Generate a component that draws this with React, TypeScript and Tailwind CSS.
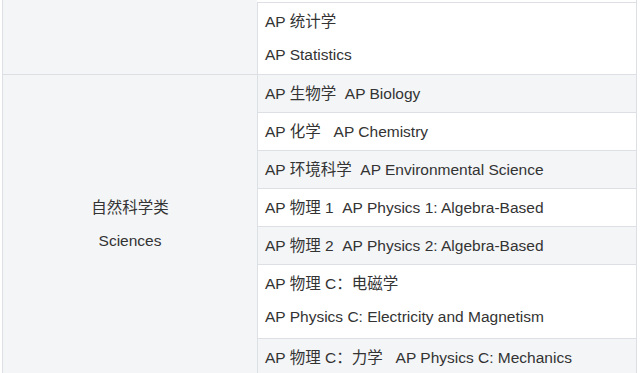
const FONT = "font-['Liberation_Sans','Noto_Sans_CJK_SC',sans-serif]";

type Course = { lines: string[] };

const SCIENCES: Course[] = [
  { lines: ["AP 生物学\u00a0 AP Biology"] },
  { lines: ["AP 化学\u00a0\u00a0 AP Chemistry"] },
  { lines: ["AP 环境科学\u00a0 AP Environmental Science"] },
  { lines: ["AP 物理 1\u00a0 AP Physics 1: Algebra-Based"] },
  { lines: ["AP 物理 2\u00a0 AP Physics 2: Algebra-Based"] },
  { lines: ["AP 物理 C：电磁学", "AP Physics C: Electricity and Magnetism"] },
  { lines: ["AP 物理 C：力学\u00a0\u00a0 AP Physics C: Mechanics"] },
];

function Cell({ lines, shaded, first }: { lines: string[]; shaded: boolean; first?: boolean }) {
  return (
    <div
      className={`flex flex-col gap-[9px] px-[7px] pt-[7px] ${lines.length > 1 ? "pb-[9px]" : "pb-[6px]"} ${
        first ? "" : "border-t"
      } border-[#dcdfe4] ${shaded ? "bg-[#f4f5f7]" : "bg-white"}`}
    >
      {lines.map((l) => (
        <p key={l} className="leading-[24px] whitespace-nowrap">
          {l}
        </p>
      ))}
    </div>
  );
}

export default function App() {
  return (
    <div className={`h-[373px] overflow-hidden bg-white ${FONT} text-[15.5px] text-[#333]`}>
      <div className="ml-[2px] w-[635px] border-x border-[#dcdfe4]">
        {/* tail of the previous group */}
        <div className="flex">
          <div className="w-[254px] bg-[#f4f5f7]" />
          <div className="flex-1 mt-[2px] border-l border-t border-[#dcdfe4] bg-white px-[7px] pt-[7px] pb-[7px] flex flex-col gap-[9px]">
            <p className="leading-[24px]">AP 统计学</p>
            <p className="leading-[24px]">AP Statistics</p>
          </div>
        </div>

        {/* sciences */}
        <div className="flex border-t border-[#dcdfe4]">
          <div className="w-[254px] bg-[#f4f5f7] flex flex-col items-center justify-center gap-[9px] pb-[2px]">
            <p className="leading-[24px]">自然科学类</p>
            <p className="leading-[24px]">Sciences</p>
          </div>
          <div className="flex-1 border-l border-[#dcdfe4]">
            {SCIENCES.map((c, i) => (
              <Cell key={i} lines={c.lines} shaded={i % 2 === 0} first={i === 0} />
            ))}
          </div>
        </div>
      </div>
    </div>
  );
}
